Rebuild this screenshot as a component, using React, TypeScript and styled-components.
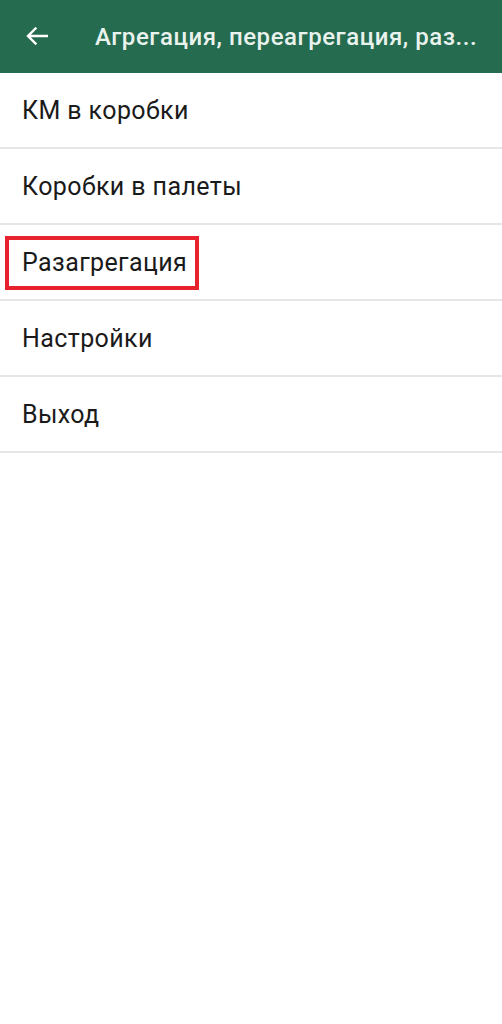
import styled, { createGlobalStyle } from "styled-components";

const GlobalStyle = createGlobalStyle`
  body {
    margin: 0;
    background: #ffffff;
    font-family: Roboto, "Noto Sans", sans-serif;
  }
`;

const Screen = styled.div`
  width: 502px;
  min-height: 1024px;
  background: #ffffff;
`;

const Toolbar = styled.header`
  height: 73px;
  background: #246b4f;
  display: flex;
  align-items: center;
  padding-left: 25px;
  box-sizing: border-box;
`;

const BackButton = styled.button`
  border: none;
  background: transparent;
  padding: 0;
  width: 24px;
  height: 24px;
  display: flex;
  align-items: center;
  justify-content: center;
  color: #ffffff;
  margin-right: 46px;
  margin-top: -2px;
`;

const Title = styled.div`
  color: #eaf2ed;
  font-size: 24px;
  font-weight: 500;
  letter-spacing: 0.55px;
  white-space: nowrap;
`;

const Menu = styled.ul`
  list-style: none;
  margin: 0;
  padding: 0;
`;

const Row = styled.li`
  height: 74px;
  border-bottom: 2px solid #e6e6e6;
  display: flex;
  align-items: center;
  padding-left: 5px;
`;

const Label = styled.span<{ $marked?: boolean }>`
  font-size: 25px;
  letter-spacing: 0.4px;
  color: #1a1a1a;
  padding: 0 ${(p) => (p.$marked ? "8px" : "17px")} 2px 13px;
  border: 4px solid ${(p) => (p.$marked ? "#e8212f" : "transparent")};
  height: 44px;
  display: flex;
  align-items: center;
  margin-top: 2px;
`;

const items = ["КМ в коробки", "Коробки в палеты", "Разагрегация", "Настройки", "Выход"];

const App = () => {
  return (
    <Screen>
      <GlobalStyle />
      <Toolbar>
        <BackButton aria-label="Назад">
          <svg width="22" height="18" viewBox="0 0 22 18" fill="none">
            <path
              d="M21 9H2.5M9.5 1.5L2 9l7.5 7.5"
              stroke="currentColor"
              strokeWidth="2.4"
              strokeLinecap="square"
            />
          </svg>
        </BackButton>
        <Title>Агрегация, переагрегация, раз...</Title>
      </Toolbar>
      <Menu>
        {items.map((item) => (
          <Row key={item}>
            <Label $marked={item === "Разагрегация"}>{item}</Label>
          </Row>
        ))}
      </Menu>
    </Screen>
  );
};

export default App;
